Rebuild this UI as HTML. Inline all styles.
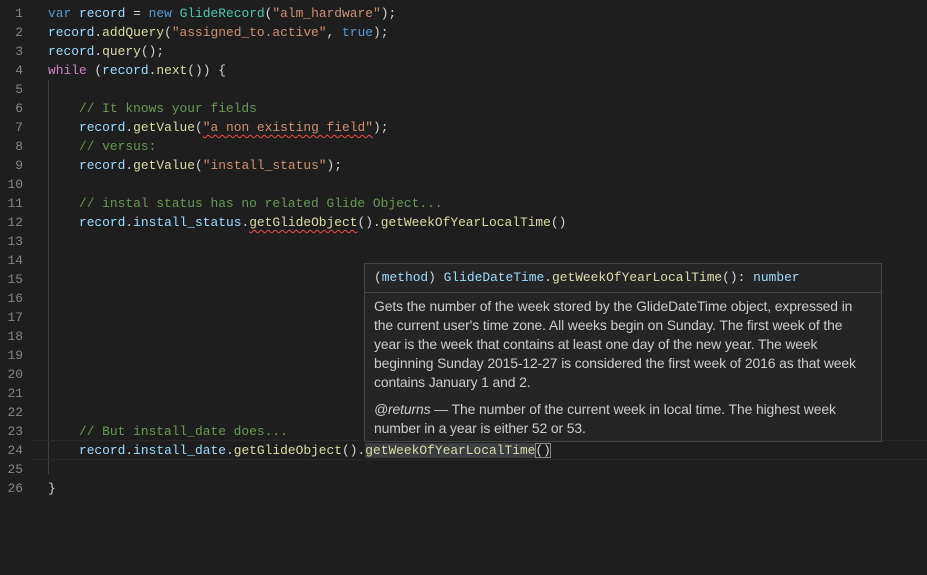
<!DOCTYPE html>
<html><head><style>
body{margin:0;width:927px;height:575px;background:#1e1e1e;overflow:hidden;position:relative;font-family:"Liberation Mono",monospace;}
.ln{position:absolute;left:0;width:23px;text-align:right;color:#858585;font-size:12.9px;line-height:19px;}
.c{position:absolute;left:48px;white-space:pre;font-size:12.9px;line-height:19px;color:#d4d4d4;}
.k{color:#569cd6}.v{color:#9cdcfe}.f{color:#dcdcaa}.s{color:#ce9178}.cm{color:#6a9955}.w{color:#c586c0}.t{color:#4ec9b0}
.sq{text-decoration:underline wavy #f14c4c;text-underline-offset:3px;text-decoration-thickness:1px}
.guide{position:absolute;left:48px;top:80px;width:1px;height:394px;background:#404040}
.cur{position:absolute;left:30px;right:0;top:440px;height:18px;border-top:1px solid #282828;border-bottom:1px solid #282828}
.tip{position:absolute;left:364px;top:263px;width:516px;height:177px;background:#252526;border:1px solid #454545;box-sizing:content-box}
.hd{height:28px;border-bottom:1px solid #454545;padding-left:9px;line-height:28px;font-size:12.9px;white-space:pre;color:#d4d4d4}
.bd{padding:4px 9px 0 9px;font-family:"Liberation Sans",sans-serif;font-size:13.9px;line-height:19px;color:#cccccc;white-space:nowrap;letter-spacing:-0.1px}
.bd p{margin:0 0 8px 0}
</style></head><body>
<div class="guide"></div>
<div class="cur"></div>
<div class="ln" style="top:4px">1</div><div class="ln" style="top:23px">2</div><div class="ln" style="top:42px">3</div><div class="ln" style="top:61px">4</div><div class="ln" style="top:80px">5</div><div class="ln" style="top:99px">6</div><div class="ln" style="top:118px">7</div><div class="ln" style="top:137px">8</div><div class="ln" style="top:156px">9</div><div class="ln" style="top:175px">10</div><div class="ln" style="top:194px">11</div><div class="ln" style="top:213px">12</div><div class="ln" style="top:232px">13</div><div class="ln" style="top:251px">14</div><div class="ln" style="top:270px">15</div><div class="ln" style="top:289px">16</div><div class="ln" style="top:308px">17</div><div class="ln" style="top:327px">18</div><div class="ln" style="top:346px">19</div><div class="ln" style="top:365px">20</div><div class="ln" style="top:384px">21</div><div class="ln" style="top:403px">22</div><div class="ln" style="top:422px">23</div><div class="ln" style="top:441px">24</div><div class="ln" style="top:460px">25</div><div class="ln" style="top:479px">26</div>

<div class="c" style="top:4px"><span class="k">var</span> <span class="v">record</span> = <span class="k">new</span> <span class="t">GlideRecord</span>(<span class="s">"alm_hardware"</span>);</div>
<div class="c" style="top:23px"><span class="v">record</span>.<span class="f">addQuery</span>(<span class="s">"assigned_to.active"</span>, <span class="k">true</span>);</div>
<div class="c" style="top:42px"><span class="v">record</span>.<span class="f">query</span>();</div>
<div class="c" style="top:61px"><span class="w">while</span> (<span class="v">record</span>.<span class="f">next</span>()) {</div>
<div class="c" style="top:99px">    <span class="cm">// It knows your fields</span></div>
<div class="c" style="top:118px">    <span class="v">record</span>.<span class="f">getValue</span>(<span class="s sq">"a non existing field"</span>);</div>
<div class="c" style="top:137px">    <span class="cm">// versus:</span></div>
<div class="c" style="top:156px">    <span class="v">record</span>.<span class="f">getValue</span>(<span class="s">"install_status"</span>);</div>
<div class="c" style="top:194px">    <span class="cm">// instal status has no related Glide Object...</span></div>
<div class="c" style="top:213px">    <span class="v">record</span>.<span class="v">install_status</span>.<span class="f sq">getGlideObject</span>().<span class="f">getWeekOfYearLocalTime</span>()</div>
<div class="c" style="top:422px">    <span class="cm">// But install_date does...</span></div>
<div class="c" style="top:441px">    <span class="v">record</span>.<span class="v">install_date</span>.<span class="f">getGlideObject</span>().<span class="f" style="background:#3a3d41">getWeekOfYearLocalTime</span><span style="outline:1px solid #888;outline-offset:-1px">()</span></div>
<div class="c" style="top:479px">}</div>

<div class="tip">
<div class="hd">(<span class="v">method</span>) <span class="v">GlideDateTime</span>.<span class="f">getWeekOfYearLocalTime</span>(): <span class="v">number</span></div>
<div class="bd"><p>Gets the number of the week stored by the GlideDateTime object, expressed in<br>the current user's time zone. All weeks begin on Sunday. The first week of the<br>year is the week that contains at least one day of the new year. The week<br>beginning Sunday 2015-12-27 is considered the first week of 2016 as that week<br>contains January 1 and 2.</p><p><i>@returns</i> — The number of the current week in local time. The highest week<br>number in a year is either 52 or 53.</p></div>
</div>
</body></html>
